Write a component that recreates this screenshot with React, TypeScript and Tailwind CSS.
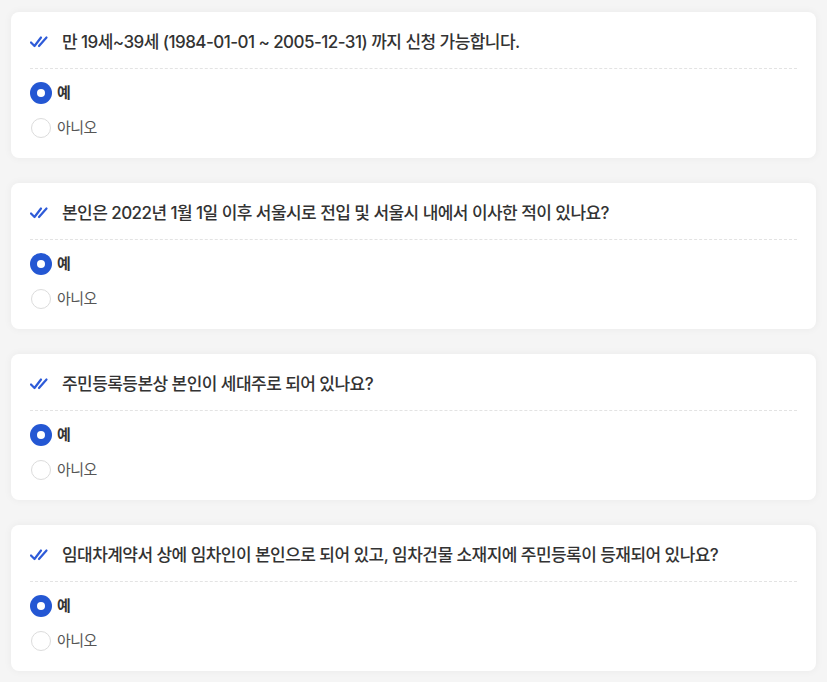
import { useState } from "react";

const questions = [
  "만 19세~39세 (1984-01-01 ~ 2005-12-31) 까지 신청 가능합니다.",
  "본인은 2022년 1월 1일 이후 서울시로 전입 및 서울시 내에서 이사한 적이 있나요?",
  "주민등록등본상 본인이 세대주로 되어 있나요?",
  "임대차계약서 상에 임차인이 본인으로 되어 있고, 임차건물 소재지에 주민등록이 등재되어 있나요?",
];

function DoubleCheck() {
  return (
    <svg width="20" height="14" viewBox="0 0 20 14" fill="none" className="shrink-0">
      <path d="M1 7.5L4.5 11L11 2.5" stroke="#2e5bd8" strokeWidth="2.2" strokeLinecap="round" strokeLinejoin="round" />
      <path d="M9 11L16.5 2.5" stroke="#2e5bd8" strokeWidth="2.2" strokeLinecap="round" strokeLinejoin="round" />
    </svg>
  );
}

function Radio({ checked, label, onClick }: { checked: boolean; label: string; onClick: () => void }) {
  return (
    <button type="button" onClick={onClick} className="flex items-center gap-[5px] h-[22px] leading-[22px] text-left">
      <span className="w-[22px] h-[22px] flex items-center justify-center">
        {checked ? (
          <span className="w-[22px] h-[22px] rounded-full bg-[#2457d3] flex items-center justify-center">
            <span className="w-[8px] h-[8px] rounded-full bg-white" />
          </span>
        ) : (
          <span className="w-[20px] h-[20px] rounded-full border border-[#dcdcdc] bg-white" />
        )}
      </span>
      <span
        className={
          checked
            ? "text-[15px] leading-[22px] font-bold text-[#333] tracking-[-0.5px]"
            : "text-[15px] leading-[22px] text-[#555] tracking-[-0.5px]"
        }
      >
        {label}
      </span>
    </button>
  );
}

export default function App() {
  const [answers, setAnswers] = useState<boolean[]>([true, true, true, true]);

  return (
    <div
      className="min-h-screen bg-[#f5f5f5] px-[11px] pt-[12px] pb-[12px] flex flex-col gap-[25px]"
      style={{ fontFamily: 'Inter, "Noto Sans CJK KR", "Noto Sans", sans-serif' }}
    >
      {questions.map((q, i) => (
        <div key={i} className="bg-white rounded-[8px] shadow-[0_0_8px_rgba(0,0,0,0.05)] px-[19px] pt-[18px] pb-[19px]">
          <div className="flex items-center gap-[12px] h-[24px]">
            <DoubleCheck />
            <p className="text-[17px] font-medium text-[#333] tracking-[-0.55px] leading-[24px]">{q}</p>
          </div>
          <div className="border-t border-dashed border-[#e3e3e3] mt-[14px]" />
          <div className="flex flex-col gap-[13px] mt-[13px]">
            <Radio
              checked={answers[i]}
              label="예"
              onClick={() => setAnswers((a) => a.map((v, j) => (j === i ? true : v)))}
            />
            <Radio
              checked={!answers[i]}
              label="아니오"
              onClick={() => setAnswers((a) => a.map((v, j) => (j === i ? false : v)))}
            />
          </div>
        </div>
      ))}
    </div>
  );
}
